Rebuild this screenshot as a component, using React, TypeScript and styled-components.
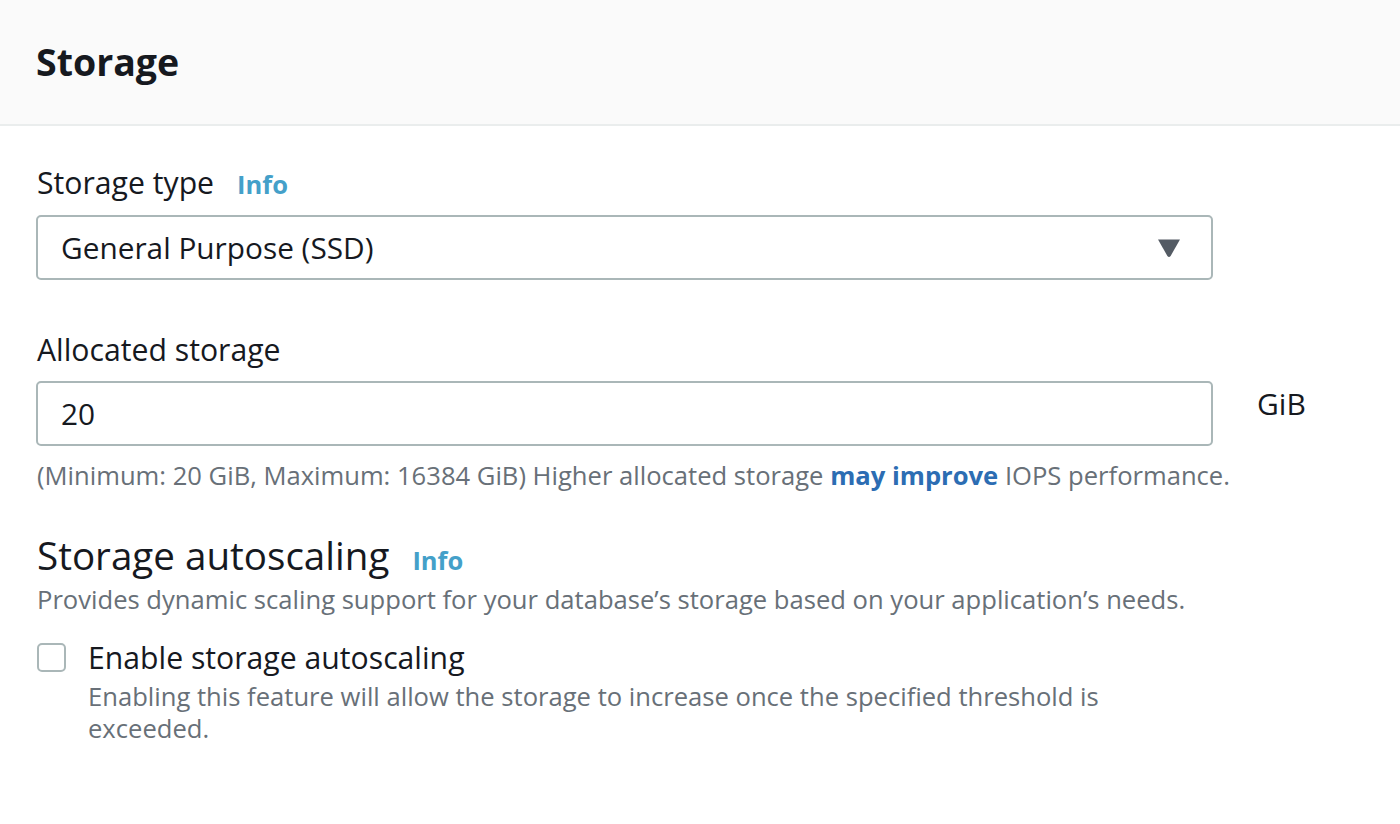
import styled, { createGlobalStyle } from "styled-components";

const GlobalStyle = createGlobalStyle`
  html, body {
    margin: 0;
    padding: 0;
    background: #ffffff;
  }
  body {
    font-family: "Open Sans", "Noto Sans", Arial, sans-serif;
    color: #16191f;
  }
`;

const Panel = styled.section`
  width: 1400px;
  height: 824px;
  background: #ffffff;
`;

const Header = styled.header`
  height: 126px;
  display: flex;
  align-items: center;
  padding-left: 36px;
  background: #fafafa;
  border-bottom: 2px solid #eaeded;
  box-sizing: border-box;
`;

const Title = styled.h2`
  margin: 0 0 2px;
  font-size: 37.5px;
  font-weight: 700;
  color: #16191f;
`;

const Body = styled.div`
  display: flex;
  flex-direction: column;
  padding: 37px 0 0 36px;
`;

const Field = styled.div<{ $gap?: number }>`
  display: flex;
  flex-direction: column;
  margin-bottom: ${({ $gap }) => $gap ?? 0}px;
`;

const Label = styled.label`
  display: flex;
  align-items: baseline;
  gap: 23px;
  font-size: 30.2px;
  line-height: 40px;
  color: #16191f;
  margin-left: 1px;
  margin-bottom: 11px;
`;

const InfoLink = styled.a<{ $size?: number }>`
  font-size: ${({ $size }) => $size ?? 25.5}px;
  font-weight: 700;
  color: #44a0c9;
  text-decoration: none;
`;

const ControlRow = styled.div`
  display: flex;
  align-items: flex-start;
  gap: 44px;
`;

const Box = styled.div`
  width: 1177px;
  height: 65px;
  flex: none;
  box-sizing: border-box;
  border: 2px solid #aab7b8;
  border-radius: 5px;
  display: flex;
  align-items: center;
  justify-content: space-between;
  padding: 0 30px 0 23px;
  font-size: 29.8px;
  color: #16191f;
`;

const Caret = styled.svg`
  width: 24px;
  height: 20px;
  fill: #545b64;
`;

const Unit = styled.span`
  font-size: 30px;
  line-height: 40px;
  color: #16191f;
  margin-top: 3px;
`;

const Hint = styled.p`
  margin: 13px 0 0 1px;
  font-size: 25.6px;
  line-height: 34px;
  color: #687078;

  strong {
    color: #2c6db3;
    font-weight: 700;
  }
`;

const SectionHeading = styled.h3`
  display: flex;
  align-items: baseline;
  gap: 23px;
  margin: 0 0 1px 1px;
  font-size: 38.6px;
  line-height: 44px;
  font-weight: 400;
  color: #16191f;
`;

const Description = styled.p`
  margin: 0 0 0 1px;
  font-size: 25.6px;
  line-height: 33px;
  color: #687078;
`;

const CheckRow = styled.label`
  display: flex;
  align-items: flex-start;
  gap: 22px;
  margin-top: 22px;
  margin-left: 1px;
`;

const CheckBox = styled.span`
  flex: none;
  width: 29px;
  height: 29px;
  margin-top: 5px;
  box-sizing: border-box;
  border: 2px solid #aab7b8;
  border-radius: 5px;
  background: #ffffff;
`;

const CheckText = styled.div`
  display: flex;
  flex-direction: column;
  width: 1060px;
`;

const CheckTitle = styled.span`
  font-size: 30.2px;
  line-height: 40px;
  color: #16191f;
`;

const CheckHint = styled(Description)`
  margin: 3px 0 0;
  line-height: 32px;
`;

export default function App() {
  return (
    <>
      <GlobalStyle />
      <Panel>
        <Header>
          <Title>Storage</Title>
        </Header>
        <Body>
          <Field $gap={50}>
            <Label>
              Storage type <InfoLink>Info</InfoLink>
            </Label>
            <Box>
              General Purpose (SSD)
              <Caret viewBox="0 0 24 20">
                <path d="M1 1.5 H23 L13.6 18 Q12 20 10.4 18 Z" />
              </Caret>
            </Box>
          </Field>
          <Field $gap={40}>
            <Label>Allocated storage</Label>
            <ControlRow>
              <Box>20</Box>
              <Unit>GiB</Unit>
            </ControlRow>
            <Hint>
              (Minimum: 20 GiB, Maximum: 16384 GiB) Higher allocated storage{" "}
              <strong>may improve</strong> IOPS performance.
            </Hint>
          </Field>
          <SectionHeading>
            Storage autoscaling <InfoLink $size={25.5}>Info</InfoLink>
          </SectionHeading>
          <Description>
            Provides dynamic scaling support for your database’s storage based
            on your application’s needs.
          </Description>
          <CheckRow>
            <CheckBox />
            <CheckText>
              <CheckTitle>Enable storage autoscaling</CheckTitle>
              <CheckHint>
                Enabling this feature will allow the storage to increase once
                the specified threshold is exceeded.
              </CheckHint>
            </CheckText>
          </CheckRow>
        </Body>
      </Panel>
    </>
  );
}
